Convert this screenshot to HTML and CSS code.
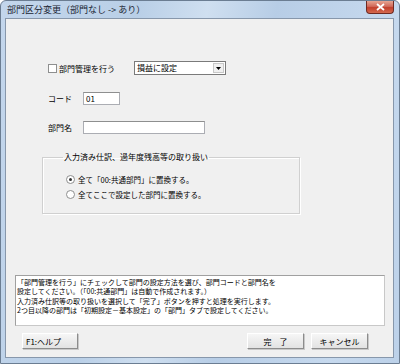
FILE: index.html
```html
<!DOCTYPE html>
<html lang="ja">
<head>
    <meta charset="UTF-8">
    <title>部門区分変更</title>
    <link rel="stylesheet" href="styles.css">
</head>
<body>
    <div class="window">
        <div class="titlebar">
            <span class="title">部門区分変更（部門なし -&gt; あり）</span>
            <span class="close">
                <svg width="9" height="8" viewBox="0 0 9 8">
                    <path d="M1 1 L8 7 M8 1 L1 7" stroke="#fff" stroke-width="1.8" fill="none"/>
                </svg>
            </span>
        </div>
        <div class="client">
            <div class="form">
                <div class="row row-check">
                    <label class="check"><span class="box"></span>部門管理を行う</label>
                    <div class="select">
                        <span class="select-text">損益に設定</span>
                        <span class="select-btn">
                            <svg width="5" height="3" viewBox="0 0 5 3"><path d="M0 0 H5 L2.5 3 Z" fill="#000"/></svg>
                        </span>
                    </div>
                </div>
                <div class="row row-code">
                    <span class="lbl">コード</span>
                    <span class="input input-code">01</span>
                </div>
                <div class="row row-name">
                    <span class="lbl">部門名</span>
                    <span class="input input-name"></span>
                </div>
                <fieldset class="group">
                    <legend>入力済み仕訳、過年度残高等の取り扱い</legend>
                    <label class="radio"><span class="dot on"></span>全て「00:共通部門」に置換する。</label>
                    <label class="radio"><span class="dot"></span>全てここで設定した部門に置換する。</label>
                </fieldset>
            </div>
            <div class="help">
                <p>「部門管理を行う」にチェックして部門の設定方法を選び、部門コードと部門名を</p>
                <p>設定してください。（「00:共通部門」は自動で作成されます。）</p>
                <p>入力済み仕訳等の取り扱いを選択して「完了」ボタンを押すと処理を実行します。</p>
                <p>2つ目以降の部門は「初期設定－基本設定」の「部門」タブで設定してください。</p>
            </div>
            <div class="buttons">
                <span class="btn btn-help">F1:ヘルプ</span>
                <span class="spacer"></span>
                <span class="btn">完　了</span>
                <span class="btn">キャンセル</span>
            </div>
        </div>
    </div>
</body>
</html>
```

FILE: styles.css
```css
* {
    box-sizing: border-box;
}

body {
    margin: 0;
    font-family: "Noto Sans CJK JP", "Liberation Sans", sans-serif;
    font-size: 8px;
    color: #000;
}

.window {
    width: 400px;
    height: 364px;
    display: flex;
    flex-direction: column;
    padding: 0 5px 5px 4px;
    background: linear-gradient(100deg, #c3d6ec 0%, #b9cfe7 30%, #cfdff0 45%, #b7cde6 60%, #c6d9ee 85%, #bcd1e9 100%);
    border: 1px solid #6b7d92;
    border-radius: 6px 6px 0 0;
}

.titlebar {
    height: 17px;
    display: flex;
    align-items: flex-start;
    justify-content: space-between;
}

.title {
    margin: 3px 0 0 2px;
    font-size: 9px;
    line-height: 11px;
    color: #1a2533;
}

.close {
    width: 28px;
    height: 13px;
    display: flex;
    align-items: center;
    justify-content: center;
    background: linear-gradient(#e7a592 0%, #d0695a 45%, #c23f2c 55%, #d46a4f 100%);
    border: 1px solid #6e2a22;
    border-top: none;
    border-radius: 0 0 4px 4px;
}

.client {
    flex: 1;
    display: flex;
    flex-direction: column;
    background: #f0f0f0;
    border: 1px solid #8797ab;
}

.form {
    flex: 1;
    padding: 42px 0 0 36px;
}

.row {
    display: flex;
    align-items: center;
    margin-left: 6px;
}

.row-check {
    height: 14px;
}

.row-code {
    margin-top: 17px;
}

.row-name {
    margin-top: 16px;
}

.check {
    width: 86px;
    display: flex;
    align-items: center;
}

.box {
    width: 9px;
    height: 9px;
    margin-right: 2px;
    background: #fff;
    border: 1px solid #8e8f8f;
}

.select {
    width: 92px;
    height: 14px;
    display: flex;
    align-items: center;
    background: #fff;
    border: 1px solid #7a7a7a;
    padding: 1px;
}

.select-text {
    flex: 1;
    padding-left: 1px;
    line-height: 10px;
}

.select-btn {
    width: 11px;
    height: 10px;
    display: flex;
    align-items: center;
    justify-content: center;
    background: #f0f0f0;
    border: 1px solid #c8c8c8;
}

.lbl {
    width: 35px;
}

.input {
    height: 13px;
    padding-left: 2px;
    line-height: 11px;
    background: #fff;
    border: 1px solid #abadb3;
    border-top-color: #8e8f8f;
}

.input-code {
    width: 37px;
}

.input-name {
    width: 122px;
}

.group {
    width: 258px;
    height: 62px;
    margin: 18px 0 0 0;
    padding: 10px 0 0 23px;
    border: 1px solid #d0d0d0;
    box-shadow: 1px 1px 0 #fff, inset 1px 1px 0 #fff;
}

.group legend {
    padding: 0 1px;
    margin-left: -3px;
    line-height: 10px;
}

.radio {
    display: flex;
    align-items: center;
    height: 15px;
    font-size: 7.5px;
}

.dot {
    width: 9px;
    height: 9px;
    margin-right: 3px;
    border-radius: 50%;
    border: 1px solid #8e8f8f;
    background: #fff;
    position: relative;
}

.dot.on::after {
    content: "";
    position: absolute;
    left: 2px;
    top: 2px;
    width: 3px;
    height: 3px;
    border-radius: 50%;
    background: #333;
}

.help {
    width: 370px;
    height: 51px;
    margin-left: 9px;
    padding: 2px 0 0 1px;
    font-size: 7px;
    background: #fff;
    border: 1px solid #a0a0a0;
    border-right-color: #c8c8c8;
    border-bottom-color: #c8c8c8;
}

.help p {
    margin: 0;
    height: 9.3px;
    line-height: 9px;
}

.buttons {
    display: flex;
    gap: 7px;
    margin: 7px 25px 8px 16px;
}

.spacer {
    flex: 1;
}

.btn {
    width: 57px;
    height: 16px;
    display: flex;
    align-items: center;
    justify-content: center;
    background: linear-gradient(#f6f6f6, #e2e2e2);
    border: 1px solid #fff;
    border-right-color: #8c8c8c;
    border-bottom-color: #8c8c8c;
    box-shadow: 1px 1px 0 #c8c8c8;
}

.btn-help {
    width: 56px;
    justify-content: flex-start;
    padding-left: 3px;
}
```
